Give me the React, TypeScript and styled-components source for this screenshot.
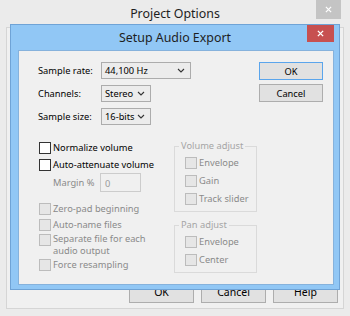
import styled, { createGlobalStyle } from 'styled-components';

const GlobalStyle = createGlobalStyle`
  html, body { margin: 0; padding: 0; }
  body {
    font-family: "Noto Sans", "Liberation Sans", sans-serif;
    background: #ebebeb;
  }
  * { box-sizing: border-box; }
`;

const Desktop = styled.div`
  position: relative;
  width: 350px;
  height: 316px;
  overflow: hidden;
  background: #ebebeb;
  display: flex;
  flex-direction: column;
`;

const TitleBar = styled.div<{ $h: number }>`
  display: grid;
  grid-template-columns: 1fr auto 1fr;
  height: ${p => p.$h}px;
  flex: none;
`;

const TitleText = styled.div<{ $top: number }>`
  grid-column: 2;
  font-size: 12.4px;
  line-height: 16px;
  color: #1e1e1e;
  padding-top: ${p => p.$top}px;
  white-space: nowrap;
`;

const CloseBtn = styled.div<{ $bg: string; $w: number; $h: number; $mr: number }>`
  grid-column: 3;
  justify-self: end;
  width: ${p => p.$w}px;
  height: ${p => p.$h}px;
  margin-right: ${p => p.$mr}px;
  background: ${p => p.$bg};
  display: flex;
  align-items: center;
  justify-content: center;
`;

const OuterClient = styled.div`
  flex: 1;
  margin: 0 6px 7px 6px;
  border: 1px solid #d5d5d5;
  background: #f0f0f0;
  display: flex;
  align-items: flex-end;
  justify-content: flex-end;
  gap: 7px;
  padding: 0 5px 5px 0;
`;

const Button = styled.div<{ $w: number; $h: number; $default?: boolean; $pt?: number; $fs?: number }>`
  width: ${p => p.$w}px;
  height: ${p => p.$h}px;
  border: 1px solid ${p => (p.$default ? '#5aa5ec' : '#adadad')};
  background: #e1e1e1;
  font-size: ${p => p.$fs ?? 9.3}px;
  color: #000;
  padding-top: ${p => p.$pt ?? 0}px;
  display: flex;
  align-items: center;
  justify-content: center;
`;

const Dialog = styled.div`
  position: absolute;
  left: 10px;
  top: 24px;
  width: 330px;
  height: 266px;
  background: #91c7f5;
  border: 1px solid #6fa3d6;
  display: flex;
  flex-direction: column;
`;

const DialogClient = styled.div`
  flex: 1;
  margin: 0 5px 4px 7px;
  border: 1px solid #86b2dc;
  background: #f0f0f0;
  padding: 11px 10px 0 19px;
  display: flex;
  flex-direction: column;
`;

const TopSection = styled.div`
  display: flex;
  justify-content: space-between;
  align-items: flex-start;
`;

const Form = styled.div`
  display: grid;
  grid-template-columns: 63px auto;
  grid-auto-rows: 17px;
  row-gap: 6px;
  align-items: center;
`;

const Label = styled.span<{ $disabled?: boolean; $w?: number }>`
  font-size: 9.3px;
  line-height: 12px;
  width: ${p => (p.$w ? `${p.$w}px` : 'auto')};
  color: ${p => (p.$disabled ? '#8a8a8a' : '#000')};
  white-space: nowrap;
`;

const Combo = styled.div<{ $w: number }>`
  width: ${p => p.$w}px;
  height: 17px;
  border: 1px solid #acacac;
  background: #ececec;
  display: flex;
  align-items: center;
  justify-content: space-between;
  padding: 0 5px 0 3px;
  font-size: 9.3px;
  color: #000;
`;

const ButtonCol = styled.div`
  display: flex;
  flex-direction: column;
  gap: 4px;
`;

const BottomSection = styled.div`
  margin-top: 14px;
  display: grid;
  grid-template-columns: 136px 83px;
`;

const Column = styled.div`
  display: flex;
  flex-direction: column;
`;

const CheckRow = styled.div<{ $h: number; $mt?: number; $pl?: number }>`
  height: ${p => p.$h}px;
  margin-top: ${p => p.$mt ?? 0}px;
  padding-left: ${p => p.$pl ?? 1}px;
  display: flex;
  align-items: center;
  gap: 2px;
`;

const MultiRow = styled.div`
  height: 24px;
  padding-left: 1px;
  display: flex;
  align-items: flex-start;
  gap: 2px;
  & > :first-child { margin-top: 1px; }
`;

const Box = styled.span<{ $disabled?: boolean }>`
  flex: none;
  width: 12px;
  height: 12px;
  border: 1px solid ${p => (p.$disabled ? '#bcbcbc' : '#333')};
  background: ${p => (p.$disabled ? '#e6e6e6' : '#fff')};
`;

const MarginRow = styled.div`
  height: 19px;
  padding-left: 15px;
  display: flex;
  align-items: center;
`;

const TextField = styled.div`
  width: 41px;
  height: 19px;
  border: 1px solid #cccccc;
  background: #f0f0f0;
  font-size: 9.3px;
  color: #9a9a9a;
  padding: 3px 0 0 4px;
`;

const Group = styled.div<{ $mt: number }>`
  position: relative;
  margin-top: ${p => p.$mt}px;
  border: 1px solid #dadada;
  padding: 7px 0 3px 0;
`;

const Legend = styled.span`
  position: absolute;
  top: -7px;
  left: 4px;
  padding: 0 2px;
  background: #f0f0f0;
  font-size: 9.3px;
  line-height: 12px;
  color: #a5a5a5;
  white-space: nowrap;
`;

const Chevron = () => (
  <svg width="8" height="5" viewBox="0 0 8 5">
    <path d="M1 1 L4 4 L7 1" fill="none" stroke="#333" strokeWidth="1.1" />
  </svg>
);

const Cross = ({ size, weight }: { size: number; weight: number }) => (
  <svg width={size} height={size} viewBox="0 0 8 8">
    <path d="M1 1 L7 7 M7 1 L1 7" stroke="#fff" strokeWidth={weight} />
  </svg>
);

const Check = ({ label, disabled }: { label: string; disabled?: boolean }) => (
  <>
    <Box $disabled={disabled} />
    <Label $disabled={disabled}>{label}</Label>
  </>
);

const App = () => {
  return (
    <Desktop>
      <GlobalStyle />
      <TitleBar $h={27}>
        <TitleText $top={6}>Project Options</TitleText>
        <CloseBtn $bg="#c4c4c4" $w={25} $h={19} $mr={9}>
          <Cross size={7} weight={1.4} />
        </CloseBtn>
      </TitleBar>
      <OuterClient>
        <Button $w={65} $h={23} $fs={10.5}>OK</Button>
        <Button $w={65} $h={23} $fs={10.5}>Cancel</Button>
        <Button $w={65} $h={23} $fs={10.5}>Help</Button>
      </OuterClient>

      <Dialog>
        <TitleBar $h={25}>
          <TitleText $top={5}>Setup Audio Export</TitleText>
          <CloseBtn $bg="#c75050" $w={27} $h={17} $mr={5}>
            <Cross size={7} weight={1.6} />
          </CloseBtn>
        </TitleBar>
        <DialogClient>
          <TopSection>
            <Form>
              <Label>Sample rate:</Label>
              <Combo $w={90}>44,100 Hz<Chevron /></Combo>
              <Label>Channels:</Label>
              <Combo $w={50}>Stereo<Chevron /></Combo>
              <Label>Sample size:</Label>
              <Combo $w={50}>16-bits<Chevron /></Combo>
            </Form>
            <ButtonCol>
              <Button $w={64} $h={18} $default>OK</Button>
              <Button $w={64} $h={18}>Cancel</Button>
            </ButtonCol>
          </TopSection>

          <BottomSection>
            <Column>
              <CheckRow $h={17}><Check label="Normalize volume" /></CheckRow>
              <CheckRow $h={17}><Check label="Auto-attenuate volume" /></CheckRow>
              <MarginRow>
                <Label $disabled $w={47}>Margin %</Label>
                <TextField>0</TextField>
              </MarginRow>
              <CheckRow $h={16} $mt={9}><Check label="Zero-pad beginning" disabled /></CheckRow>
              <CheckRow $h={16}><Check label="Auto-name files" disabled /></CheckRow>
              <MultiRow>
                <Box $disabled />
                <Label $disabled>Separate file for each<br />audio output</Label>
              </MultiRow>
              <CheckRow $h={15}><Check label="Force resampling" disabled /></CheckRow>
            </Column>

            <Column>
              <Group $mt={7}>
                <Legend>Volume adjust</Legend>
                <CheckRow $h={18} $pl={10}><Check label="Envelope" disabled /></CheckRow>
                <CheckRow $h={18} $pl={10}><Check label="Gain" disabled /></CheckRow>
                <CheckRow $h={18} $pl={10}><Check label="Track slider" disabled /></CheckRow>
              </Group>
              <Group $mt={13}>
                <Legend>Pan adjust</Legend>
                <CheckRow $h={18} $pl={10}><Check label="Envelope" disabled /></CheckRow>
                <CheckRow $h={18} $pl={10}><Check label="Center" disabled /></CheckRow>
              </Group>
            </Column>
          </BottomSection>
        </DialogClient>
      </Dialog>
    </Desktop>
  );
};

export default App;
